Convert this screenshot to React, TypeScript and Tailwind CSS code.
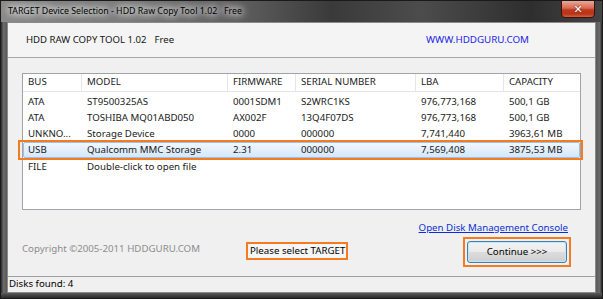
import React from "react";

const F = "font-['Noto_Sans','Open_Sans',sans-serif]";

const cols = [
  { w: "w-[59px]" },
  { w: "w-[146px]" },
  { w: "w-[68px]" },
  { w: "w-[120px]" },
  { w: "w-[88px]" },
  { w: "flex-1" },
];

const header = ["BUS", "MODEL", "FIRMWARE", "SERIAL NUMBER", "LBA", "CAPACITY"];
const rows = [
  ["ATA", "ST9500325AS", "0001SDM1", "S2WRC1KS", "976,773,168", "500,1 GB"],
  ["ATA", "TOSHIBA MQ01ABD050", "AX002F", "13Q4F07DS", "976,773,168", "500,1 GB"],
  ["UNKNO...", "Storage Device", "0000", "000000", "7,741,440", "3963,61 MB"],
  ["USB", "Qualcomm MMC Storage", "2.31", "000000", "7,569,408", "3875,53 MB"],
  ["FILE", "Double-click to open file", "", "", "", ""],
];

function Row({ cells }: { cells: string[] }) {
  return (
    <div className="flex h-[16px] items-center">
      {cells.map((c, i) => (
        <div key={i} className={`${cols[i].w} shrink-0 pl-[5px] whitespace-nowrap leading-[16px]`}>
          {c}
        </div>
      ))}
    </div>
  );
}

export default function App() {
  return (
    <div className={`w-[603px] h-[299px] flex flex-col bg-[#3c3c3c] ${F} text-[9.7px] text-[#1b1b1b] overflow-hidden border border-[#1a1a1a]`}>
      {/* Title bar */}
      <div className="relative h-[21px] shrink-0 flex items-center bg-[linear-gradient(90deg,#8a8a8a_0%,#7a7a7a_20%,#5e5e5e_40%,#3a3a3a_55%,#4c4c4c_70%,#2e2e2e_88%,#444_100%)]">
        <div className="pl-[7px] text-[8.8px] text-black whitespace-nowrap [text-shadow:0_0_6px_#fff,0_0_8px_#fff,0_0_10px_#ddd]">
          TARGET Device Selection - HDD Raw Copy Tool 1.02&nbsp;&nbsp;&nbsp;Free
        </div>
        <div className="absolute right-[7px] top-[-1px] w-[34px] h-[18px] rounded-b-[4px] border border-[#3b120a] bg-[linear-gradient(180deg,#e9a898_0%,#d66a52_45%,#c2391c_55%,#b8341a_80%,#d46040_100%)] flex items-center justify-center">
          <span className="text-white text-[11px] font-bold leading-none font-['DejaVu_Sans',sans-serif] [text-shadow:0_0_2px_#5a1a10]">✕</span>
        </div>
      </div>
      {/* Middle */}
      <div className="flex flex-1 min-h-0">
        <div className="w-[6px] shrink-0 bg-[linear-gradient(90deg,#2a2a2a,#6a6a6a_40%,#5a5a5a)]" />
        <div className="flex-1 flex flex-col bg-[#f0f0f0] border border-[#8a8a8a]">
          {/* header panel */}
          <div className="h-[35px] shrink-0 flex items-center bg-[#f4f4f4] border-b border-[#a8a8a8] pl-[18px] pr-[66px]">
            <span className="whitespace-nowrap text-[9.6px] text-[#151515]">HDD RAW COPY TOOL 1.02</span>
            <span className="ml-[8px] whitespace-nowrap text-[9.6px] text-[#151515]">Free</span>
            <div className="flex-1" />
            <span className="text-[#2424e8] whitespace-nowrap text-[9.8px]">WWW.HDDGURU.COM</span>
          </div>
          {/* list */}
          <div className="mt-[15px] mx-[14px] h-[137px] shrink-0 bg-white border border-[#a0a4aa] flex flex-col">
            <div className="flex h-[18px] items-center border-b border-[#e5e5e5]">
              {header.map((h, i) => (
                <div key={i} className={`${cols[i].w} shrink-0 pl-[5px] h-full flex items-center whitespace-nowrap ${i < 5 ? "border-r border-[#e3e6ea]" : ""}`}>
                  {h}
                </div>
              ))}
            </div>
            <div className="h-[2px]" />
            <Row cells={rows[0]} />
            <Row cells={rows[1]} />
            <Row cells={rows[2]} />
            <div className="relative">
              <div className="absolute left-[-5px] right-[-3px] top-[-2px] bottom-[-2px] border-2 border-[#f47b20]" />
              <div className="rounded-[2px] border border-[#9ec0e8] bg-[linear-gradient(180deg,#f1f7fe,#d4e7fb)]">
                <div className="-m-[1px]">
                  <Row cells={rows[3]} />
                </div>
              </div>
            </div>
            <div className="h-[1px]" />
            <Row cells={rows[4]} />
          </div>
          {/* link */}
          <div className="flex justify-end pr-[27px] mt-[10px] h-[16px] items-center">
            <span className="text-[#0a2fd8] underline whitespace-nowrap">Open Disk Management Console</span>
          </div>
          {/* bottom row */}
          <div className="flex items-start mt-[1px] h-[30px]">
            <div className="mt-[5px] w-[238px] pl-[14px] h-[14px] leading-[14px] text-[#8d8d8d] whitespace-nowrap">Copyright ©2005-2011 HDDGURU.COM</div>
            <div className="mt-[5px] h-[18px] pl-[2px] pr-[1px] border-2 border-[#f47b20] bg-[#f6f6f6] flex items-center whitespace-nowrap text-black leading-none">
              Please select TARGET
            </div>
            <div className="flex-1" />
            <div className="mr-[24px] w-[108px] h-[30px] border-2 border-[#f47b20] p-[2px] flex">
              <div className="flex-1 rounded-[3px] border border-[#3c7fb1] shadow-[inset_0_0_0_1px_#bfe9fb] bg-[linear-gradient(180deg,#f2f2f2_0%,#ebebeb_48%,#dcdcdc_52%,#cfcfcf_100%)] flex items-center justify-center text-black whitespace-nowrap">
                Continue &gt;&gt;&gt;
              </div>
            </div>
          </div>
          <div className="flex-1" />
          {/* status bar */}
          <div className="h-[16px] shrink-0 border-t border-[#a0a0a0] bg-[#f0f0f0] flex items-center pl-[1px] text-black whitespace-nowrap">
            Disks found: 4
          </div>
        </div>
        <div className="w-[6px] shrink-0 bg-[linear-gradient(90deg,#5a5a5a,#6a6a6a_60%,#2a2a2a)]" />
      </div>
      <div className="h-[5px] shrink-0 bg-[linear-gradient(180deg,#5a5a5a,#2a2a2a)]" />
    </div>
  );
}
